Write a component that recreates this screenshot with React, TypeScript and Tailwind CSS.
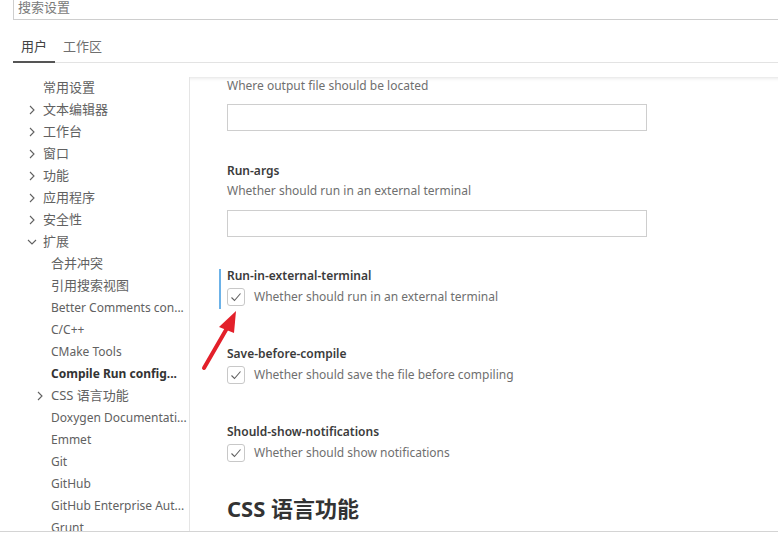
import React from "react";

const latin = "font-['Noto_Sans','Noto_Sans_CJK_SC',sans-serif]";

interface TreeRow {
  label: string;
  depth: 0 | 1;
  chevron?: "right" | "down";
  bold?: boolean;
  cjk?: boolean;
}

const rows: TreeRow[] = [
  { label: "常用设置", depth: 0, cjk: true },
  { label: "文本编辑器", depth: 0, chevron: "right", cjk: true },
  { label: "工作台", depth: 0, chevron: "right", cjk: true },
  { label: "窗口", depth: 0, chevron: "right", cjk: true },
  { label: "功能", depth: 0, chevron: "right", cjk: true },
  { label: "应用程序", depth: 0, chevron: "right", cjk: true },
  { label: "安全性", depth: 0, chevron: "right", cjk: true },
  { label: "扩展", depth: 0, chevron: "down", cjk: true },
  { label: "合并冲突", depth: 1, cjk: true },
  { label: "引用搜索视图", depth: 1, cjk: true },
  { label: "Better Comments con...", depth: 1 },
  { label: "C/C++", depth: 1 },
  { label: "CMake Tools", depth: 1 },
  { label: "Compile Run config...", depth: 1, bold: true },
  { label: "CSS 语言功能", depth: 1, chevron: "right", cjk: true },
  { label: "Doxygen Documentati...", depth: 1 },
  { label: "Emmet", depth: 1 },
  { label: "Git", depth: 1 },
  { label: "GitHub", depth: 1 },
  { label: "GitHub Enterprise Aut...", depth: 1 },
  { label: "Grunt", depth: 1 },
];

const Chevron = ({ dir }: { dir: "right" | "down" }) => (
  <svg width="10" height="12" viewBox="0 0 10 12" className="shrink-0">
    {dir === "right" ? (
      <polyline points="3,2 7,6 3,10" fill="none" stroke="#616161" strokeWidth="1.1" />
    ) : (
      <polyline points="1,4 5,8 9,4" fill="none" stroke="#616161" strokeWidth="1.1" />
    )}
  </svg>
);

const Check = () => (
  <div className="w-[18px] h-[18px] shrink-0 rounded-[3px] border border-[#c8c8c8] bg-white flex items-center justify-center">
    <svg width="16" height="16" viewBox="0 0 16 16">
      <polyline points="3.5,8.5 6.5,11.5 12.5,4.5" fill="none" stroke="#616161" strokeWidth="1.1" />
    </svg>
  </div>
);

const CheckItem = ({ title, desc, focused, className }: { title: string; desc: string; focused?: boolean; className?: string }) => (
  <div className={`border-l-2 pl-[6px] pb-[2px] ${focused ? "border-[#6cb2e8]" : "border-transparent"} ${className ?? ""}`}>
    <div className="text-[12px] leading-[14px] font-semibold text-[#3b3b3b]">{title}</div>
    <div className="mt-[4px] h-[20px] flex items-center gap-[9px]">
      <Check />
      <span className="text-[12px] leading-[20px] text-[#6f6f6f]">{desc}</span>
    </div>
  </div>
);

export default function App() {
  return (
    <div className={`w-[778px] h-[532px] bg-white overflow-hidden border-b border-[#d4d4d4] flex flex-col ${latin}`}>
      {/* search */}
      <div className="ml-[13px] h-[20px] border-l border-b border-[#cecece] pl-[4px] text-[13px] leading-[14px] text-[#7a7a7a] font-['Noto_Sans_CJK_SC',sans-serif]">
        搜索设置
      </div>

      {/* tabs */}
      <div className="ml-[13px] flex border-b border-[#e3e3e3] font-['Noto_Sans_CJK_SC',sans-serif] text-[13px]">
        <div className="px-[8px] pt-[17px] pb-[6px] leading-[18px] text-[#424242] border-b-2 border-[#555555] mb-[-1px]">用户</div>
        <div className="px-[8px] pt-[17px] pb-[6px] leading-[18px] text-[#6f6f6f] mb-[-1px]">工作区</div>
      </div>

      <div className="h-[14px]" />

      <div className="flex flex-1 min-h-0">
        {/* tree */}
        <div className="ml-[13px] w-[177px] border-r border-[#e5e5e5] overflow-hidden shrink-0">
          {rows.map((r) => (
            <div key={r.label} className="h-[22px] flex items-center whitespace-nowrap">
              <div className={`${r.depth === 0 ? "w-[30px]" : "w-[38px]"} h-[22px] shrink-0 flex items-center justify-end pr-[6px]`}>
                {r.chevron && <Chevron dir={r.chevron} />}
              </div>
              <span
                className={`${r.cjk ? "text-[13px]" : "text-[12px]"} ${r.bold ? "font-bold text-[#333333]" : "text-[#616161]"}`}
              >
                {r.label}
              </span>
            </div>
          ))}
        </div>

        {/* content */}
        <div className="relative flex-1 pl-[29px] overflow-hidden shadow-[inset_0_6px_5px_-6px_rgba(0,0,0,0.18)]">
          <div className="pl-[8px] -mt-[1px]">
            <div className="text-[12px] leading-[20px] text-[#6f6f6f]">Where output file should be located</div>
            <div className="mt-[8px] w-[420px] h-[27px] border border-[#cecece]" />
          </div>

          <div className="pl-[8px] mt-[32px]">
            <div className="text-[12px] leading-[14px] font-semibold text-[#3b3b3b] pt-[1px] h-[15px]">Run-args</div>
            <div className="mt-[3px] text-[12px] leading-[20px] text-[#6f6f6f]">Whether should run in an external terminal</div>
            <div className="mt-[9px] w-[420px] h-[27px] border border-[#cecece]" />
          </div>

          <CheckItem className="mt-[32px]" focused title="Run-in-external-terminal" desc="Whether should run in an external terminal" />
          <CheckItem className="mt-[38px]" title="Save-before-compile" desc="Whether should save the file before compiling" />
          <CheckItem className="mt-[38px]" title="Should-show-notifications" desc="Whether should show notifications" />

          <div className="pl-[8px] mt-[27px] text-[22px] leading-[32px] font-bold text-[#333333]">
            CSS 语言功能
          </div>

          {/* red annotation arrow */}
          <svg className="absolute left-[0px] top-[0px] pointer-events-none" width="80" height="320" viewBox="0 0 80 320">
            <line x1="14" y1="291" x2="40" y2="246" stroke="#e3202a" strokeWidth="4" strokeLinecap="round" />
            <polygon points="46,234 29,250 44,256" fill="#e3202a" />
          </svg>
        </div>
      </div>
    </div>
  );
}
